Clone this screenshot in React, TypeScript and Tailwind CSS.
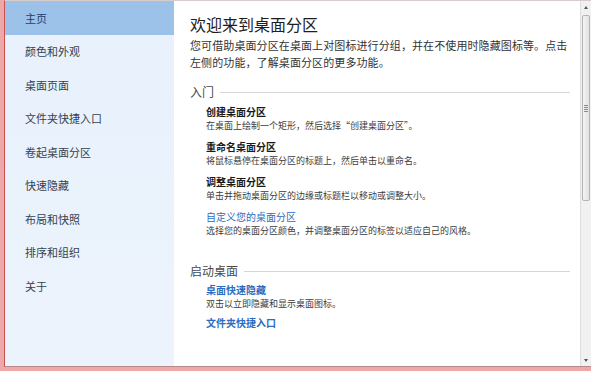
import React from 'react';

const navItems = ['主页', '颜色和外观', '桌面页面', '文件夹快捷入口', '卷起桌面分区', '快速隐藏', '布局和快照', '排序和组织', '关于'];

const gettingStarted = [
  { title: '创建桌面分区', desc: '在桌面上绘制一个矩形，然后选择“创建桌面分区”。', link: false },
  { title: '重命名桌面分区', desc: '将鼠标悬停在桌面分区的标题上，然后单击以重命名。', link: false },
  { title: '调整桌面分区', desc: '单击并拖动桌面分区的边缘或标题栏以移动或调整大小。', link: false },
  { title: '自定义您的桌面分区', desc: '选择您的桌面分区颜色，并调整桌面分区的标签以适应自己的风格。', link: true },
];

const SectionHeader: React.FC<{ label: string; className?: string }> = ({ label, className }) => (
  <div className={`flex items-center gap-[6px] h-[16px] pr-[2px] text-[12px] leading-[16px] text-[#4a4a4a] ${className ?? ''}`}>
    <span>{label}</span>
    <div className="flex-1 h-px bg-[#d6d6d6]" />
  </div>
);

const Scrollbar = () => (
  <div className="w-[11px] flex flex-col items-center bg-[#f1f1f1] border-l border-[#dedede]">
    {/* 上箭头 */}
    <div className="h-[12px] flex items-center justify-center">
      <div className="w-0 h-0 border-l-[2.5px] border-r-[2.5px] border-b-[3px] border-l-transparent border-r-transparent border-b-[#555]" />
    </div>
    <div className="flex-1 w-full px-px">
      <div className="h-[186px] mt-[2px] rounded-[2px] border border-[#b4b4b4] bg-gradient-to-r from-[#f4f4f4] to-[#e2e2e2] flex flex-col items-center justify-center gap-[1px]">
        <div className="w-[4px] h-px bg-[#8a8a8a]" />
        <div className="w-[4px] h-px bg-[#8a8a8a]" />
        <div className="w-[4px] h-px bg-[#8a8a8a]" />
        <div className="w-[4px] h-px bg-[#8a8a8a]" />
      </div>
    </div>
    {/* 下箭头 */}
    <div className="h-[12px] flex items-center justify-center">
      <div className="w-0 h-0 border-l-[2.5px] border-r-[2.5px] border-t-[3px] border-l-transparent border-r-transparent border-t-[#555]" />
    </div>
  </div>
);

export default function App() {
  return (
    <div
      className="w-[591px] h-[371px] overflow-hidden bg-[#eda9a9] pl-[4px] pb-[4px]"
      style={{ fontFamily: '"Noto Sans CJK SC", "Noto Sans", sans-serif' }}
    >
      <div className="h-full flex border-l border-[#c8504e] border-t border-t-[#d7cccc] border-b border-b-[#b98a8a]">
        {/* 侧边栏 */}
        <div className="w-[169px] bg-gradient-to-b from-[#e8f1fc] to-[#ecf3fc]">
          {navItems.map((item, i) => (
            <div
              key={item}
              className={`h-[33.5px] flex items-center pl-[20px] text-[11px] ${
                i === 0 ? 'bg-[#9cc2e9] text-[#22406a]' : 'text-[#36414f]'
              }`}
            >
              {item}
            </div>
          ))}
        </div>

        {/* 内容 */}
        <div className="flex-1 bg-white pl-[16px] pr-[8px] pt-[12px]">
          <h1 className="text-[16px] leading-[22px] text-[#1e1e1e] font-normal">欢迎来到桌面分区</h1>
          <p className="mt-[1.5px] text-[11px] leading-[17px] tracking-[0.1px] text-[#333]">
            您可借助桌面分区在桌面上对图标进行分组，并在不使用时隐藏图标等。点击左侧的功能，了解桌面分区的更多功能。
          </p>

          <SectionHeader label="入门" className="mt-[13.5px]" />
          <div className="pl-[16px] mt-[5px] flex flex-col gap-[7px]">
            {gettingStarted.map((g) => (
              <div key={g.title}>
                <div className={`text-[10px] leading-[14px] font-bold ${g.link ? 'text-[#2a6cc0] font-normal' : 'text-[#1a1a1a]'}`}>
                  {g.title}
                </div>
                <div className="text-[9px] leading-[14px] text-[#3c3c3c]">{g.desc}</div>
              </div>
            ))}
          </div>

          <SectionHeader label="启动桌面" className="mt-[25px]" />
          <div className="pl-[16px] mt-[4px]">
            <div className="text-[10px] leading-[14px] font-bold text-[#2a6cc0]">桌面快速隐藏</div>
            <div className="text-[9px] leading-[14px] text-[#3c3c3c]">双击以立即隐藏和显示桌面图标。</div>
            <div className="mt-[5px] text-[10px] leading-[14px] font-bold text-[#2a6cc0]">文件夹快捷入口</div>
          </div>
        </div>

        <Scrollbar />
      </div>
    </div>
  );
}
